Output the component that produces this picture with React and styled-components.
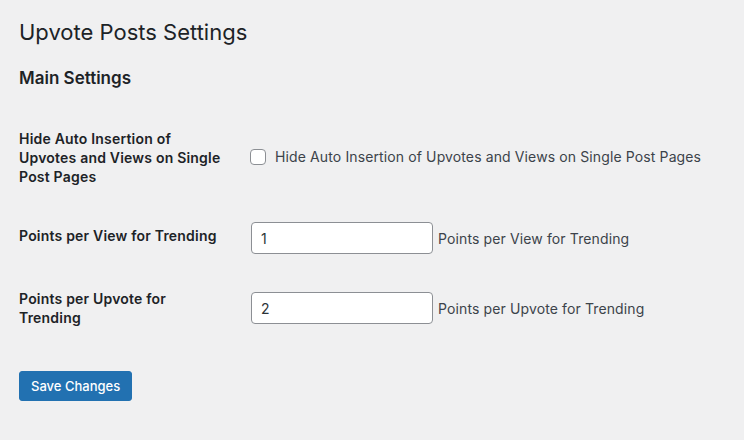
import React, { useState } from "react";
import styled, { createGlobalStyle } from "styled-components";

const GlobalStyle = createGlobalStyle`
  html, body {
    margin: 0;
    padding: 0;
    background: #f0f0f1;
  }
  body {
    font-family: Inter, "Liberation Sans", Arial, sans-serif;
    color: #1d2327;
    font-size: 14px;
  }
`;

const Wrap = styled.div`
  padding: 12px 19px 20px;
`;

const PageTitle = styled.h1`
  font-size: 22px;
  font-weight: 400;
  line-height: 30px;
  margin: 5px 0 0;
  color: #1d2327;
`;

const SectionTitle = styled.h2`
  font-size: 17px;
  font-weight: 600;
  line-height: 22px;
  margin: 20px 0 20px;
  color: #1d2327;
`;

const FormTable = styled.table`
  border-collapse: collapse;
  width: 100%;
`;

const RowHead = styled.th`
  width: 210px;
  padding: 20px 10px 20px 0;
  text-align: left;
  vertical-align: top;
  font-size: 14px;
  font-weight: 600;
  letter-spacing: 0.2px;
  line-height: 19px;
  color: #1d2327;
`;

const Cell = styled.td`
  padding: ${(p) => (p.$tall ? "16px 10px 15px" : "15px 10px")};
  vertical-align: middle;
  line-height: 19px;
`;

const CheckLabel = styled.label`
  display: inline-flex;
  align-items: center;
  gap: 9px;
  color: #3c434a;
  font-size: 14px;
  letter-spacing: 0.12px;
`;

const Checkbox = styled.input.attrs({ type: "checkbox" })`
  appearance: none;
  width: 16px;
  height: 16px;
  margin: 1px 0 0 1px;
  border: 1px solid #8c8f94;
  border-radius: 4px;
  background: #fff;
  box-sizing: border-box;
`;

const TextInput = styled.input.attrs({ type: "text" })`
  width: 182px;
  height: 32px;
  box-sizing: border-box;
  margin: 0 0 0 2px;
  padding: 0 9px;
  border: 1px solid #8c8f94;
  border-radius: 4px;
  background: #fff;
  font-family: inherit;
  font-size: 14px;
  color: #2c3338;
  vertical-align: middle;
`;

const Description = styled.span`
  margin-left: 5px;
  color: #3c434a;
  font-size: 14px;
  letter-spacing: 0.12px;
  vertical-align: middle;
`;

const Submit = styled.p`
  margin: 24px 0 0;
`;

const PrimaryButton = styled.button`
  height: 30px;
  padding: 0 11px;
  border: 1px solid #2271b1;
  border-radius: 3px;
  background: #2271b1;
  color: #fff;
  font-family: inherit;
  font-size: 13px;
  font-weight: 500;
`;

function App() {
  const [hideAuto, setHideAuto] = useState(false);
  const [viewPoints, setViewPoints] = useState("1");
  const [upvotePoints, setUpvotePoints] = useState("2");

  return (
    <>
      <GlobalStyle />
      <Wrap>
        <PageTitle>Upvote Posts Settings</PageTitle>
        <SectionTitle>Main Settings</SectionTitle>
        <FormTable>
          <tbody>
            <tr>
              <RowHead>Hide Auto Insertion of Upvotes and Views on Single Post Pages</RowHead>
              <Cell>
                <CheckLabel>
                  <Checkbox
                    checked={hideAuto}
                    onChange={(e) => setHideAuto(e.target.checked)}
                  />
                  Hide Auto Insertion of Upvotes and Views on Single Post Pages
                </CheckLabel>
              </Cell>
            </tr>
            <tr>
              <RowHead>Points per View for Trending</RowHead>
              <Cell $tall>
                <TextInput
                  value={viewPoints}
                  onChange={(e) => setViewPoints(e.target.value)}
                />
                <Description>Points per View for Trending</Description>
              </Cell>
            </tr>
            <tr>
              <RowHead>Points per Upvote for Trending</RowHead>
              <Cell>
                <TextInput
                  value={upvotePoints}
                  onChange={(e) => setUpvotePoints(e.target.value)}
                />
                <Description>Points per Upvote for Trending</Description>
              </Cell>
            </tr>
          </tbody>
        </FormTable>
        <Submit>
          <PrimaryButton>Save Changes</PrimaryButton>
        </Submit>
      </Wrap>
    </>
  );
}

export default App;
